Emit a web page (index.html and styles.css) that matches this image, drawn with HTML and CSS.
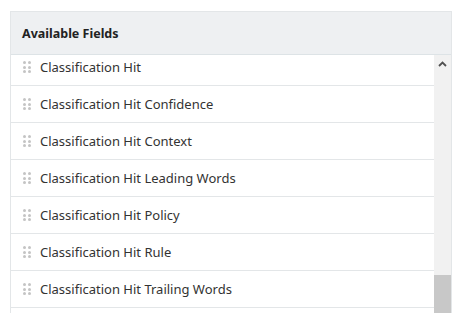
FILE: index.html
```html
<!DOCTYPE html>
<html>
<head>
<meta charset="utf-8">
<link rel="stylesheet" href="styles.css">
</head>
<body>
<div class="panel">
  <div class="panel-header">Available Fields</div>
  <div class="panel-body">
    <ul class="field-list">
      <li class="field"><span class="grip"><i></i><i></i><i></i><i></i><i></i><i></i></span>Classification Hit</li>
      <li class="field"><span class="grip"><i></i><i></i><i></i><i></i><i></i><i></i></span>Classification Hit Confidence</li>
      <li class="field"><span class="grip"><i></i><i></i><i></i><i></i><i></i><i></i></span>Classification Hit Context</li>
      <li class="field"><span class="grip"><i></i><i></i><i></i><i></i><i></i><i></i></span>Classification Hit Leading Words</li>
      <li class="field"><span class="grip"><i></i><i></i><i></i><i></i><i></i><i></i></span>Classification Hit Policy</li>
      <li class="field"><span class="grip"><i></i><i></i><i></i><i></i><i></i><i></i></span>Classification Hit Rule</li>
      <li class="field"><span class="grip"><i></i><i></i><i></i><i></i><i></i><i></i></span>Classification Hit Trailing Words</li>
    </ul>
    <div class="scrollbar">
      <div class="scroll-up"><svg width="9" height="6" viewBox="0 0 9 6"><path d="M1 5 L4.5 1.5 L8 5" fill="none" stroke="#505050" stroke-width="1.8"/></svg></div>
      <div class="scroll-track"></div>
      <div class="scroll-thumb"></div>
    </div>
  </div>
</div>
</body>
</html>
```
FILE: styles.css
```css
html, body {
  margin: 0;
  padding: 0;
  background: #ffffff;
}
body {
  padding: 11px 0 0 10px;
  font-family: "Noto Sans", "Liberation Sans", sans-serif;
  color: #333333;
  overflow: hidden;
  height: 313px;
  box-sizing: border-box;
}
.panel {
  width: 442px;
  border: 1px solid #e3e6e8;
  border-bottom: none;
  box-sizing: border-box;
}
.panel-header {
  height: 42px;
  background: #eef0f2;
  border-bottom: 1px solid #dde3e6;
  display: flex;
  align-items: center;
  padding-left: 11px;
  font-weight: 700;
  font-size: 12.5px;
  color: #222222;
}
.panel-body {
  display: flex;
  height: 260px;
  overflow: hidden;
}
.field-list {
  list-style: none;
  margin: -6px 0 0 0;
  padding: 0;
  flex: 1;
}
.field {
  height: 36px;
  border-bottom: 1px solid #e3e6e8;
  display: flex;
  align-items: center;
  padding-left: 12px;
  font-size: 13px;
  color: #333333;
}
.grip {
  display: grid;
  grid-template-columns: 3px 3px;
  grid-auto-rows: 3px;
  column-gap: 2px;
  row-gap: 1.5px;
  margin-right: 9px;
}
.grip i {
  display: block;
  width: 3px;
  height: 3px;
  border-radius: 50%;
  background: #c4c4c4;
}
.scrollbar {
  width: 17px;
  display: flex;
  flex-direction: column;
  background: #f1f1f1;
}
.scroll-up {
  height: 17px;
  display: flex;
  align-items: center;
  justify-content: center;
}
.scroll-track {
  height: 203px;
}
.scroll-thumb {
  flex: 1;
  background: #c8c8c8;
}
```
